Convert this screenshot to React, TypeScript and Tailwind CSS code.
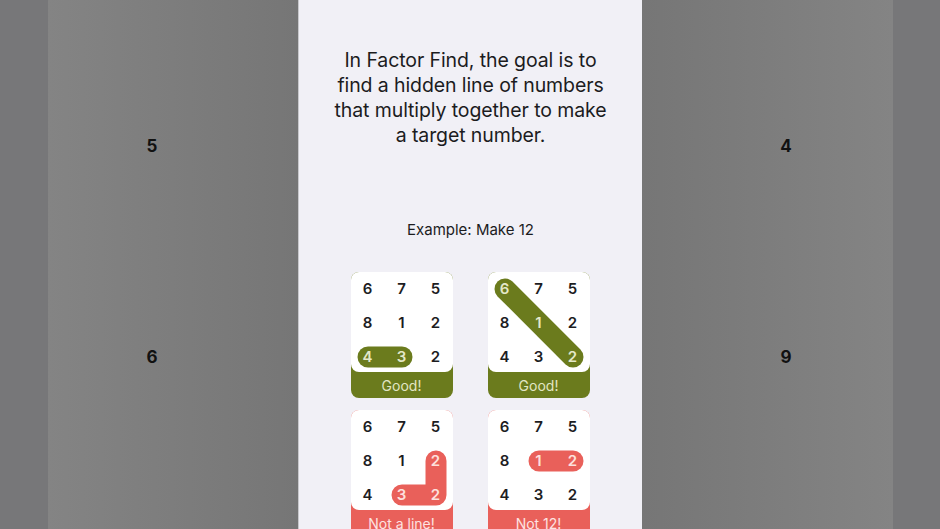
import React from "react";

const GREEN = "#6b7b1d";
const RED = "#e9605a";

function Card({
  nums,
  hl,
  color,
  label,
  path,
}: {
  nums: string[];
  hl: number[];
  color: "green" | "red";
  label: string;
  path: [number, number][];
}) {
  const c = color === "green" ? GREEN : RED;
  const d = path.map((p, i) => `${i === 0 ? "M" : "L"}${p[0] * 34 + 17} ${p[1] * 34 + 17}`).join(" ");
  return (
    <div
      className={
        "w-[102px] h-[126px] rounded-[8px] overflow-hidden flex flex-col " +
        (color === "green" ? "bg-[#6b7b1d]" : "bg-[#e9605a]")
      }
    >
      <div className="relative h-[100px] bg-white rounded-b-[8px]">
        <svg className="absolute left-0 top-0" width="102" height="100" viewBox="0 0 102 100">
          <path d={d} stroke={c} strokeWidth="21" strokeLinecap="round" strokeLinejoin="round" fill="none" />
        </svg>
        <div className="relative grid grid-cols-3">
          {nums.map((n, i) => (
            <div
              key={i}
              className={
                "h-[34px] flex items-center justify-center text-[15px] font-semibold " +
                (hl.includes(i)
                  ? color === "green"
                    ? "text-[#e4e8c9]"
                    : "text-[#fde0dd]"
                  : "text-[#1d1d1f]")
              }
            >
              {n}
            </div>
          ))}
        </div>
      </div>
      <div
        className={
          "h-[26px] flex items-center justify-center text-[14px] " +
          (color === "green" ? "text-[#e2e6c4]" : "text-[#fde3e1]")
        }
      >
        {label}
      </div>
    </div>
  );
}

const NUMS = ["6", "7", "5", "8", "1", "2", "4", "3", "2"];

export default function App() {
  return (
    <div
      className="w-[940px] h-[529px] overflow-hidden flex"
      style={{ fontFamily: "Inter, 'Noto Sans', sans-serif" }}
    >
      <div className="w-[48px] h-full bg-[#777779]" />
      <div className="w-[250px] h-full bg-gradient-to-r from-[#848484] to-[#767676] flex flex-col pl-[96px] pt-[136px] gap-[189px]">
        <div className="w-[16px] h-[22px] flex items-center justify-center text-[17px] font-bold text-[#111]">5</div>
        <div className="w-[16px] h-[22px] flex items-center justify-center text-[17px] font-bold text-[#111]">6</div>
      </div>
      <div className="w-[344px] h-full bg-[#f1f0f6] border-l border-[#c8c8cc] flex flex-col items-center">
        <div className="pt-[48px] text-[19.5px] leading-[25px] text-[#1c1c1e] text-center tracking-[-0.1px]">
          <div>In Factor Find, the goal is to</div>
          <div>find a hidden line of numbers</div>
          <div>that multiply together to make</div>
          <div>a target number.</div>
        </div>
        <div className="mt-[72px] text-[15px] leading-[20px] text-[#1c1c1e]">Example: Make 12</div>
        <div className="mt-[32px] grid grid-cols-[102px_102px] gap-x-[35px] gap-y-[12px] mr-[1px]">
          <Card nums={NUMS} hl={[6, 7]} color="green" label="Good!" path={[[0, 2], [1, 2]]} />
          <Card nums={NUMS} hl={[0, 4, 8]} color="green" label="Good!" path={[[0, 0], [2, 2]]} />
          <Card nums={NUMS} hl={[5, 7, 8]} color="red" label="Not a line!" path={[[2, 1], [2, 2], [1, 2]]} />
          <Card nums={NUMS} hl={[4, 5]} color="red" label="Not 12!" path={[[1, 1], [2, 1]]} />
        </div>
      </div>
      <div className="w-[251px] h-full bg-gradient-to-r from-[#767676] to-[#848484] flex flex-col pl-[136px] pt-[136px] gap-[189px]">
        <div className="w-[16px] h-[22px] flex items-center justify-center text-[17px] font-bold text-[#111]">4</div>
        <div className="w-[16px] h-[22px] flex items-center justify-center text-[17px] font-bold text-[#111]">9</div>
      </div>
      <div className="flex-1 h-full bg-[#777779]" />
    </div>
  );
}
